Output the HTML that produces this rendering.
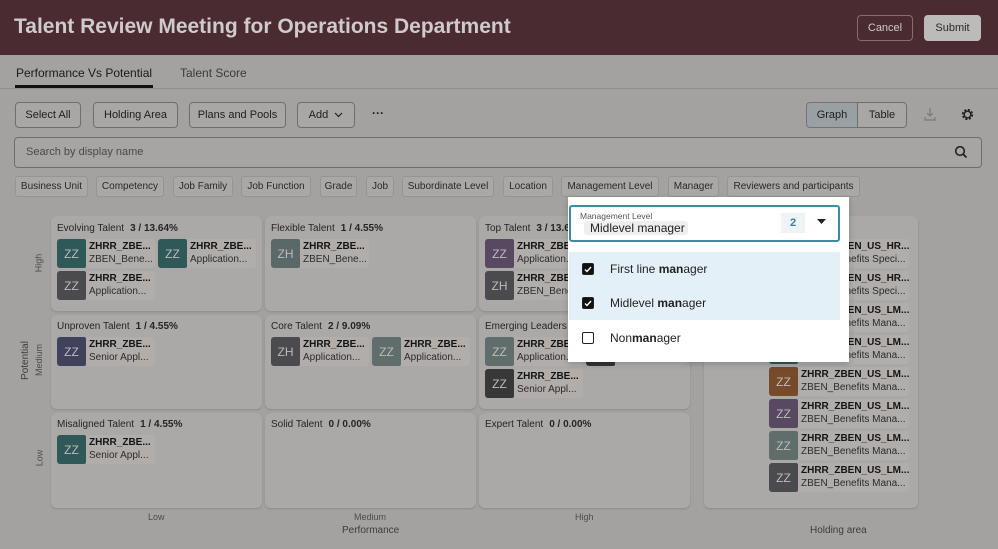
<!DOCTYPE html>
<html><head><meta charset="utf-8"><style>
*{box-sizing:border-box;margin:0;padding:0}
body{width:998px;height:549px;overflow:hidden;background:#a3a2a0;font-family:"Liberation Sans",sans-serif;position:relative;color:#1e1d1c}
.a{position:absolute}
.hdr{left:0;top:0;width:998px;height:55px;background:#4a2b31}
.title{left:14px;top:15px;font-size:21px;font-weight:bold;color:#cfcbcb;letter-spacing:0}
.hb{top:15px;height:26px;border-radius:4px;font-size:11px;display:flex;align-items:center;justify-content:center}
.btn{top:102px;height:26px;border:1px solid #6f6e6c;border-radius:4px;background:#a8a7a5;font-size:11px;display:flex;align-items:center;justify-content:center;color:#1f1e1d}
.chip{top:176px;height:21px;border:1px solid #969593;border-radius:3px;background:#a9a8a6;font-size:10px;display:flex;align-items:center;justify-content:center;color:#2a2928}
.cell{background:#aaa9a7;border-radius:6px;box-shadow:0 1px 2px rgba(0,0,0,.15)}
.ct{font-size:10px;color:#262524;white-space:nowrap}
.ct b{margin-left:6px}
.card{width:98px;height:29px;background:#b1adab;border-radius:3px;overflow:hidden}
.av{position:absolute;left:0;top:0;width:29px;height:29px;color:#bdbbba;font-size:12px;display:flex;align-items:center;justify-content:center;border-radius:2px}
.l1,.l2{position:absolute;left:32px;font-size:10px;white-space:nowrap;overflow:hidden}
.l1{top:2px;font-weight:bold;color:#141414}
.l2{top:15px;color:#2d2c2b}
.wide{width:140px}
.ax{font-size:9px;color:#4e4d4c}
.dd{left:568px;top:197px;width:281px;height:165px;background:#fff;box-shadow:0 2px 6px rgba(0,0,0,.2)}
.opt{left:569px;width:271px;height:34px;font-size:12px;display:flex;align-items:center;color:#222}
.cb{width:12px;height:12px;border:1.5px solid #222;border-radius:2px;margin:0 16px 0 13px;display:flex;align-items:center;justify-content:center}
.cb.on{background:#111}
</style></head><body>
<div class="a hdr"></div>
<div class="a title">Talent Review Meeting for Operations Department</div>
<div class="a hb" style="left:857px;width:56px;border:1px solid #8a6b70;color:#cfcbcb">Cancel</div>
<div class="a hb" style="left:924px;width:57px;background:#bdbbba;color:#2a2a2a">Submit</div>
<div class="a" style="left:16px;top:66px;font-size:12px;color:#1a1a1a">Performance Vs Potential</div>
<div class="a" style="left:15px;top:85px;width:138px;height:3px;background:#111"></div>
<div class="a" style="left:180px;top:66px;font-size:12px;color:#3c3b3a">Talent Score</div>
<div class="a" style="left:0;top:88px;width:998px;height:1px;background:#8f8e8c"></div>

<div class="a btn" style="left:15px;width:66px">Select All</div>
<div class="a btn" style="left:93px;width:85px">Holding Area</div>
<div class="a btn" style="left:189px;width:97px">Plans and Pools</div>
<div class="a btn" style="left:297px;width:58px">Add &nbsp;<svg width="9" height="6"><path d="M1 1l3.5 3.5L8 1" stroke="#222" fill="none" stroke-width="1.2"/></svg></div>
<div class="a" style="left:372px;top:106px;font-size:12px;font-weight:bold">···</div>
<div class="a btn" style="left:806px;width:52px;background:#98a0a4;border-color:#6e7478;border-radius:4px 0 0 4px">Graph</div>
<div class="a btn" style="left:857px;width:50px;border-radius:0 4px 4px 0">Table</div>
<svg class="a" style="left:922px;top:106px" width="16" height="16"><path d="M8 2v8M5 7l3 3 3-3M3 11v3h10v-3" stroke="#7b7a78" fill="none" stroke-width="1.2"/></svg>
<svg class="a" style="left:960px;top:107px" width="15" height="15" viewBox="0 0 16 16"><circle cx="8" cy="8" r="4.8" stroke="#222" stroke-width="2.4" fill="none" stroke-dasharray="2.2 1.6"/><circle cx="8" cy="8" r="3.5" stroke="#222" stroke-width="1.5" fill="none"/></svg>

<div class="a" style="left:14px;top:137px;width:968px;height:31px;border:1px solid #6f6e6c;border-radius:4px;background:#a6a5a3"></div>
<div class="a" style="left:26px;top:146px;font-size:11px;color:#4a4948">Search by display name</div>
<svg class="a" style="left:954px;top:145px" width="14" height="14"><circle cx="6" cy="6" r="4.3" stroke="#222" stroke-width="1.6" fill="none"/><path d="M9 9l3.5 3.5" stroke="#222" stroke-width="1.8"/></svg>

<div class="a chip" style="left:15px;width:73px">Business Unit</div>
<div class="a chip" style="left:96px;width:68px">Competency</div>
<div class="a chip" style="left:173px;width:60px">Job Family</div>
<div class="a chip" style="left:241px;width:70px">Job Function</div>
<div class="a chip" style="left:320px;width:37px">Grade</div>
<div class="a chip" style="left:366px;width:28px">Job</div>
<div class="a chip" style="left:402px;width:92px">Subordinate Level</div>
<div class="a chip" style="left:503px;width:50px">Location</div>
<div class="a chip" style="left:561px;width:98px">Management Level</div>
<div class="a chip" style="left:668px;width:51px">Manager</div>
<div class="a chip" style="left:727px;width:133px">Reviewers and participants</div>

<div class="a cell" style="left:51px;top:216px;width:211px;height:95px"></div>
<div class="a cell" style="left:265px;top:216px;width:211px;height:95px"></div>
<div class="a cell" style="left:479px;top:216px;width:211px;height:95px"></div>
<div class="a cell" style="left:51px;top:315px;width:211px;height:94px"></div>
<div class="a cell" style="left:265px;top:315px;width:211px;height:94px"></div>
<div class="a cell" style="left:479px;top:315px;width:211px;height:94px"></div>
<div class="a cell" style="left:51px;top:413px;width:211px;height:95px"></div>
<div class="a cell" style="left:265px;top:413px;width:211px;height:95px"></div>
<div class="a cell" style="left:479px;top:413px;width:211px;height:95px"></div>
<div class="a cell" style="left:704px;top:216px;width:214px;height:292px"></div>

<div class="a ct" style="left:57px;top:223px">Evolving Talent<b>3 / 13.64%</b></div>
<div class="a ct" style="left:271px;top:223px">Flexible Talent<b>1 / 4.55%</b></div>
<div class="a ct" style="left:485px;top:223px">Top Talent<b>3 / 13.64%</b></div>
<div class="a ct" style="left:57px;top:321px">Unproven Talent<b>1 / 4.55%</b></div>
<div class="a ct" style="left:271px;top:321px">Core Talent<b>2 / 9.09%</b></div>
<div class="a ct" style="left:485px;top:321px">Emerging Leaders<b>2 / 9.09%</b></div>
<div class="a ct" style="left:57px;top:419px">Misaligned Talent<b>1 / 4.55%</b></div>
<div class="a ct" style="left:271px;top:419px">Solid Talent<b>0 / 0.00%</b></div>
<div class="a ct" style="left:485px;top:419px">Expert Talent<b>0 / 0.00%</b></div>

<div class="a card" style="left:57px;top:239px"><div class="av" style="background:#2f5858">ZZ</div><div class="l1">ZHRR_ZBE...</div><div class="l2">ZBEN_Bene...</div></div>
<div class="a card" style="left:158px;top:239px"><div class="av" style="background:#2f5858">ZZ</div><div class="l1">ZHRR_ZBE...</div><div class="l2">Application...</div></div>
<div class="a card" style="left:57px;top:271px"><div class="av" style="background:#4a4a4f">ZZ</div><div class="l1">ZHRR_ZBE...</div><div class="l2">Application...</div></div>
<div class="a card" style="left:271px;top:239px"><div class="av" style="background:#5a6968">ZH</div><div class="l1">ZHRR_ZBE...</div><div class="l2">ZBEN_Bene...</div></div>
<div class="a card" style="left:485px;top:239px"><div class="av" style="background:#584862">ZZ</div><div class="l1">ZHRR_ZBE...</div><div class="l2">Application...</div></div>
<div class="a card" style="left:485px;top:271px"><div class="av" style="background:#4a4a4f">ZH</div><div class="l1">ZHRR_ZBE...</div><div class="l2">ZBEN_Bene...</div></div>
<div class="a card" style="left:57px;top:337px"><div class="av" style="background:#40425c">ZZ</div><div class="l1">ZHRR_ZBE...</div><div class="l2">Senior Appl...</div></div>
<div class="a card" style="left:271px;top:337px"><div class="av" style="background:#4a4a4f">ZH</div><div class="l1">ZHRR_ZBE...</div><div class="l2">Application...</div></div>
<div class="a card" style="left:372px;top:337px"><div class="av" style="background:#5f6d6b">ZZ</div><div class="l1">ZHRR_ZBE...</div><div class="l2">Application...</div></div>
<div class="a card" style="left:485px;top:337px"><div class="av" style="background:#5f6d6b">ZZ</div><div class="l1">ZHRR_ZBE...</div><div class="l2">Application...</div></div>
<div class="a card" style="left:586px;top:337px"><div class="av" style="background:#333">ZZ</div><div class="l1">ZHRR_ZBE...</div><div class="l2">Application...</div></div>
<div class="a card" style="left:485px;top:369px"><div class="av" style="background:#383838">ZZ</div><div class="l1">ZHRR_ZBE...</div><div class="l2">Senior Appl...</div></div>
<div class="a card" style="left:57px;top:435px"><div class="av" style="background:#2f5858">ZZ</div><div class="l1">ZHRR_ZBE...</div><div class="l2">Senior Appl...</div></div>

<div class="a card wide" style="left:769px;top:239px"><div class="av" style="background:#5f6d6b">ZZ</div><div class="l1">ZHRR_ZBEN_US_HR...</div><div class="l2">ZBEN_Benefits Speci...</div></div>
<div class="a card wide" style="left:769px;top:271px"><div class="av" style="background:#4a4a4f">ZZ</div><div class="l1">ZHRR_ZBEN_US_HR...</div><div class="l2">ZBEN_Benefits Speci...</div></div>
<div class="a card wide" style="left:769px;top:303px"><div class="av" style="background:#584862">ZZ</div><div class="l1">ZHRR_ZBEN_US_LM...</div><div class="l2">ZBEN_Benefits Mana...</div></div>
<div class="a card wide" style="left:769px;top:335px"><div class="av" style="background:#2f5858">ZZ</div><div class="l1">ZHRR_ZBEN_US_LM...</div><div class="l2">ZBEN_Benefits Mana...</div></div>
<div class="a card wide" style="left:769px;top:367px"><div class="av" style="background:#774a2c">ZZ</div><div class="l1">ZHRR_ZBEN_US_LM...</div><div class="l2">ZBEN_Benefits Mana...</div></div>
<div class="a card wide" style="left:769px;top:399px"><div class="av" style="background:#584862">ZZ</div><div class="l1">ZHRR_ZBEN_US_LM...</div><div class="l2">ZBEN_Benefits Mana...</div></div>
<div class="a card wide" style="left:769px;top:431px"><div class="av" style="background:#5f6d6b">ZZ</div><div class="l1">ZHRR_ZBEN_US_LM...</div><div class="l2">ZBEN_Benefits Mana...</div></div>
<div class="a card wide" style="left:769px;top:463px"><div class="av" style="background:#4a4a4f">ZZ</div><div class="l1">ZHRR_ZBEN_US_LM...</div><div class="l2">ZBEN_Benefits Mana...</div></div>

<div class="a ax" style="left:148px;top:512px">Low</div>
<div class="a ax" style="left:354px;top:512px">Medium</div>
<div class="a ax" style="left:575px;top:512px">High</div>
<div class="a" style="left:342px;top:525px;font-size:10px;color:#3e3d3c">Performance</div>
<div class="a" style="left:810px;top:525px;font-size:10px;color:#3e3d3c">Holding area</div>
<div class="a ax" style="left:29px;top:258px;transform:rotate(-90deg)">High</div>
<div class="a ax" style="left:23px;top:355px;transform:rotate(-90deg)">Medium</div>
<div class="a ax" style="left:31px;top:453px;transform:rotate(-90deg)">Low</div>
<div class="a" style="left:6px;top:355px;font-size:10px;color:#3e3d3c;transform:rotate(-90deg)">Potential</div>

<div class="a dd"></div>
<div class="a" style="left:569px;top:205px;width:271px;height:37px;border:2px solid #3f8a9c;border-radius:3px"></div>
<div class="a" style="left:580px;top:211px;font-size:8.5px;color:#555">Management Level</div>
<div class="a" style="left:584px;top:221px;width:104px;height:14px;background:#eeeeee;border-radius:3px"></div>
<div class="a" style="left:590px;top:221px;font-size:12px;color:#222">Midlevel manager</div>
<div class="a" style="left:781px;top:213px;width:24px;height:20px;background:#eef3f6;color:#3c7f96;font-size:11px;font-weight:bold;display:flex;align-items:center;justify-content:center">2</div>
<svg class="a" style="left:817px;top:219px" width="9" height="6"><path d="M0 0h9L4.5 5z" fill="#222"/></svg>
<div class="a opt" style="top:252px;background:#e4f0f7"><div class="cb on"><svg width="8" height="7"><path d="M1 3.5l2 2 4-4.5" stroke="#fff" fill="none" stroke-width="1.4"/></svg></div>First line&nbsp;<b>man</b>ager</div>
<div class="a opt" style="top:286px;background:#e4f0f7"><div class="cb on"><svg width="8" height="7"><path d="M1 3.5l2 2 4-4.5" stroke="#fff" fill="none" stroke-width="1.4"/></svg></div>Midlevel&nbsp;<b>man</b>ager</div>
<div class="a opt" style="top:321px"><div class="cb"></div>Non<b>man</b>ager</div>
</body></html>
